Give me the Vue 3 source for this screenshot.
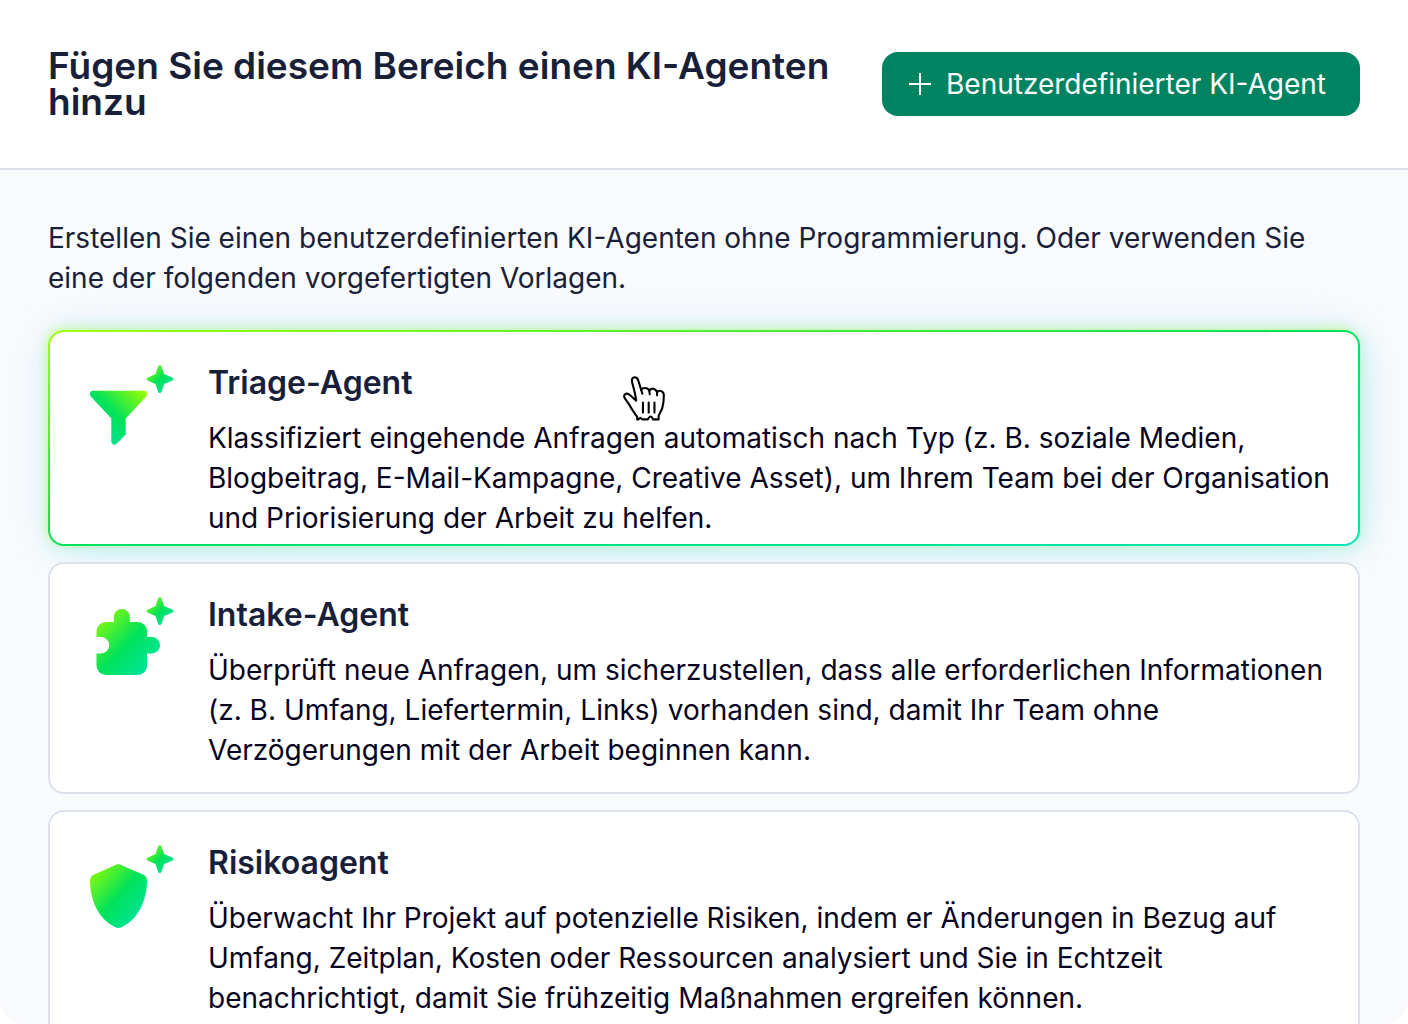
<template>
  <main class="agent-panel">
    <header class="panel-header">
      <h1 class="panel-title">Fügen Sie diesem Bereich einen KI-Agenten hinzu</h1>
      <button type="button" class="custom-btn">
        <svg class="plus" viewBox="0 0 24 24" aria-hidden="true">
          <path d="M12 1v22M1 12h22" />
        </svg>
        Benutzerdefinierter KI-Agent
      </button>
    </header>
    <section class="panel-body">
      <p class="intro">
        Erstellen Sie einen benutzerdefinierten KI-Agenten ohne Programmierung. Oder verwenden Sie
        eine der folgenden vorgefertigten Vorlagen.
      </p>
      <div class="agent-list">
        <article
          v-for="agent in agents"
          :key="agent.id"
          class="agent-card"
          :class="{ active: agent.active }"
        >
          <svg class="agent-icon" viewBox="-2 -2 90 90" aria-hidden="true">
            <defs>
              <linearGradient
                :id="`fill-${agent.id}`"
                :x1="agent.flip ? 1 : 0"
                y1="0"
                :x2="agent.flip ? 0 : 1"
                y2="1"
              >
                <stop offset="0" stop-color="#a0ff00" />
                <stop offset="0.5" stop-color="#00e25a" />
                <stop offset="1" stop-color="#00e5b0" />
              </linearGradient>
              <linearGradient :id="`star-${agent.id}`" x1="0" y1="0" x2="1" y2="1">
                <stop offset="0" stop-color="#a0ff00" />
                <stop offset="0.5" stop-color="#00e25a" />
                <stop offset="1" stop-color="#00e5b0" />
              </linearGradient>
            </defs>
            <path :d="agent.icon" :fill="`url(#fill-${agent.id})`" />
            <path :d="star" :fill="`url(#star-${agent.id})`" />
          </svg>
          <div class="agent-text">
            <h2 class="agent-title">{{ agent.title }}</h2>
            <p class="agent-description">{{ agent.description }}</p>
          </div>
          <svg v-if="agent.active" class="pointer" viewBox="0 0 42 44" aria-hidden="true">
            <path
              class="hand"
              d="M14.5 41.5V39C12 35.500 9.500 32.500 7.500 28.500C6 25.500 3 22.500 2.200 20.500C1.300 17.800 4 16 6.500 17.500C9 19 11 21.500 13.500 23.500C13 18.500 11 11 9.600 6C8.700 2.500 10.500 1.200 12 1.200C14 1.200 15 2.500 15.600 4.500L18.400 13.500C19 11 24.500 10.500 26 14C28 11 32 11.500 33.500 15.500C35.500 12.800 40 14.500 40 18.500C40 23 39.500 27 38.500 30.500C37.500 34 35.500 36 35 38.500V41.500H29.500C29 39.800 28 38.800 27 38.800C26 38.800 25.500 40.500 24.500 41.500H19.500L17.500 40L15.500 41.500Z"
            />
            <path d="M18.400 13.500L19.500 17M26 14L26.500 17.500M33.500 15.500V18.500M20 25.500V35M25.500 25.500V35M31 25.500V35" />
          </svg>
        </article>
      </div>
    </section>
  </main>
</template>
<script setup>
const star =
  "M70 2.500C70.600 .8 73 .8 73.500 2.500L76 10L84 13.500C86 14.300 86 15.900 84 16.700L76 20L73.500 27.500C73 29.500 70.600 29.500 70 27.500L67.500 20L60 16.700C58 15.900 58 14.300 60 13.500L67.500 10Z";

const agents = [
  {
    id: "triage",
    title: "Triage-Agent",
    description:
      "Klassifiziert eingehende Anfragen automatisch nach Typ (z. B. soziale Medien, Blogbeitrag, E-Mail-Kampagne, Creative Asset), um Ihrem Team bei der Organisation und Priorisierung der Arbeit zu helfen.",
    icon: "M5 26.700H56C59 26.700 60.200 30.200 58 32.700L37.700 54.500V70.500L28.500 79.700C26.500 81.800 23.300 80.500 23.300 77.500V54.500L3 32.700C.8 30.200 2 26.700 5 26.700Z",
    active: true,
    flip: true,
  },
  {
    id: "intake",
    title: "Intake-Agent",
    description:
      "Überprüft neue Anfragen, um sicherzustellen, dass alle erforderlichen Informationen (z. B. Umfang, Liefertermin, Links) vorhanden sind, damit Ihr Team ohne Verzögerungen mit der Arbeit beginnen kann.",
    icon: "M18 26H25.800V21A8 8 0 0 1 41.800 21V26H50A9 9 0 0 1 59 35V41H63.800A8.200 8.200 0 0 1 63.800 57.500H59V70A9 9 0 0 1 50 79H18A9.500 9.500 0 0 1 8.500 69.500V57.500H13A8.200 8.200 0 0 0 13 41H8.500V35.500A9.500 9.500 0 0 1 18 26Z",
  },
  {
    id: "risk",
    title: "Risikoagent",
    description:
      "Überwacht Ihr Projekt auf potenzielle Risiken, indem er Änderungen in Bezug auf Umfang, Zeitplan, Kosten oder Ressourcen analysiert und Sie in Echtzeit benachrichtigt, damit Sie frühzeitig Maßnahmen ergreifen können.",
    icon: "M28.500 20.500Q30.300 19.700 32 20.500L55 30.500Q59 32.300 59 36.500C59 55 51 75 34 83Q30.300 84.800 27 83C10 75 2 55 2 36.500Q2 32.300 6 30.500Z",
  },
];
</script>
<style>
body {
  background: #fff;
}
</style>
<style scoped>
.agent-panel {
  display: flex;
  flex-direction: column;
  height: 100vh;
  overflow: hidden;
  border-radius: 0 0 24px 24px;
  background: #f9fafc;
  color: #182039;
  font-family: Inter, "Liberation Sans", sans-serif;
}
.panel-header {
  display: flex;
  flex-shrink: 0;
  align-items: center;
  justify-content: space-between;
  gap: 32px;
  padding: 48px;
  background: #fff;
  border-bottom: 2px solid #dde1ec;
}
.panel-title {
  margin: 0;
  font-size: 37px;
  font-weight: 600;
  line-height: 36px;
}
.custom-btn {
  display: flex;
  flex-shrink: 0;
  align-items: center;
  gap: 14px;
  height: 64px;
  padding: 0 34px 0 26px;
  border: 0;
  border-radius: 16px;
  background: #008360;
  color: #fff;
  font-family: inherit;
  font-size: 28px;
  cursor: pointer;
}
.plus {
  width: 24px;
  height: 24px;
  stroke: #fff;
  stroke-width: 2;
}
.panel-body {
  padding: 48px;
}
.intro {
  margin: 0 0 32px;
  font-size: 28px;
  line-height: 40px;
}
.agent-list {
  display: flex;
  flex-direction: column;
  gap: 16px;
}
.agent-card {
  position: relative;
  display: flex;
  gap: 32px;
  padding: 30px 24px 22px 36px;
  border: 2px solid #dde1ec;
  border-radius: 16px;
  background: #fff;
}
.agent-card.active {
  padding-bottom: 6px;
  border-color: transparent;
  background:
    linear-gradient(#fff, #fff) padding-box,
    linear-gradient(to bottom right, #a0ff00, #00e25a, #00e5b8) border-box;
  box-shadow:
    -2px -2px 10px rgba(160, 255, 0, 0.32),
    4px 4px 24px rgba(0, 229, 190, 0.2),
    0 0 48px rgba(60, 180, 255, 0.14);
}
.agent-icon {
  flex-shrink: 0;
  width: 90px;
  height: 90px;
}
.agent-title {
  margin: 0 0 14px;
  font-size: 32px;
  font-weight: 600;
  line-height: 42px;
}
.agent-description {
  margin: 0;
  color: #060321;
  font-size: 28px;
  line-height: 40px;
}
.pointer {
  position: absolute;
  top: 44px;
  left: 572px;
  width: 44px;
  height: 46px;
  fill: none;
  stroke: #000;
  stroke-width: 2;
  stroke-linecap: round;
  stroke-linejoin: round;
}
.pointer .hand {
  fill: #fff;
}
</style>
